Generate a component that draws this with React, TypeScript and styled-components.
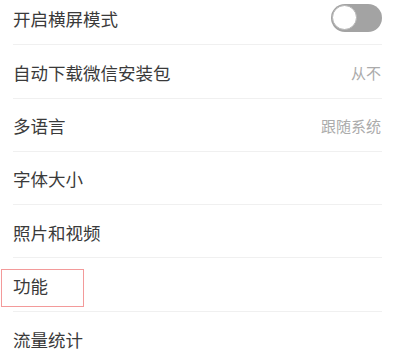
import React from "react";
import styled, { createGlobalStyle } from "styled-components";

const Global = createGlobalStyle`
  html, body { margin: 0; padding: 0; background: #ffffff; }
  body { font-family: "Noto Sans CJK SC", "Noto Sans", sans-serif; overflow: hidden; }
`;

const Page = styled.div`
  width: 395px;
  height: 352px;
  overflow: hidden;
  background: #ffffff;
`;

const List = styled.div`
  display: flex;
  flex-direction: column;
  margin-top: -8px;
`;

const Row = styled.div<{ $last?: boolean }>`
  position: relative;
  box-sizing: border-box;
  height: 53.3px;
  margin: 0 13px;
  display: flex;
  align-items: center;
  justify-content: space-between;
  padding-top: 2px;
  border-bottom: ${(p) => (p.$last ? "none" : "1px solid #f0f0f0")};
`;

const Label = styled.span`
  font-size: 17.5px;
  color: #3a3a3a;
  line-height: 1;
  letter-spacing: 0;
`;

const Value = styled.span`
  font-size: 15px;
  color: #ababab;
  line-height: 1;
  margin-right: 1px;
`;

const Toggle = styled.div`
  box-sizing: border-box;
  width: 51px;
  height: 28px;
  border-radius: 14px;
  background: #a3a3a3;
  display: flex;
  align-items: center;
  padding-left: 1px;
  margin-top: -3px;
`;

const Knob = styled.div`
  box-sizing: border-box;
  width: 25px;
  height: 25px;
  border-radius: 50%;
  background: #ffffff;
  border: 1.5px solid #b5b5b5;
`;

const Highlight = styled.div`
  position: absolute;
  left: -12px;
  top: 11px;
  width: 83px;
  height: 38px;
  box-sizing: border-box;
  border: 1.5px solid #f39a9a;
  pointer-events: none;
`;

export default function App() {
  return (
    <Page>
      <Global />
      <List>
        <Row>
          <Label>开启横屏模式</Label>
          <Toggle>
            <Knob />
          </Toggle>
        </Row>
        <Row>
          <Label>自动下载微信安装包</Label>
          <Value>从不</Value>
        </Row>
        <Row>
          <Label>多语言</Label>
          <Value>跟随系统</Value>
        </Row>
        <Row>
          <Label>字体大小</Label>
        </Row>
        <Row>
          <Label>照片和视频</Label>
        </Row>
        <Row>
          <Label>功能</Label>
          <Highlight />
        </Row>
        <Row $last>
          <Label>流量统计</Label>
        </Row>
      </List>
    </Page>
  );
}
